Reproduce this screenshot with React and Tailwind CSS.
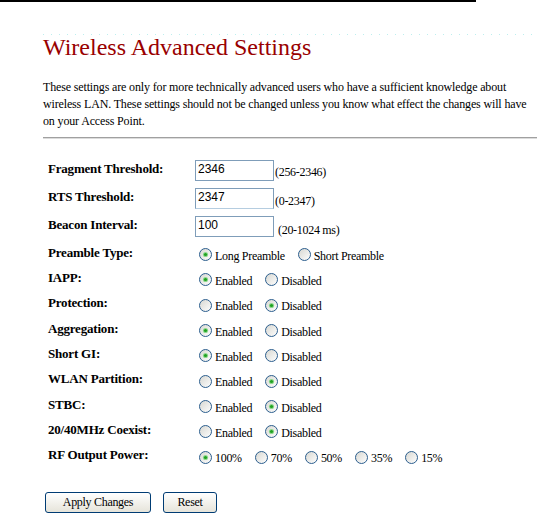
const serif = "font-['Liberation_Serif','Times_New_Roman',serif]"

const textRows = [
  { label: 'Fragment Threshold:', value: '2346', hint: '(256-2346)', hintClass: 'ml-px pt-[6px]' },
  { label: 'RTS Threshold:', value: '2347', hint: '(0-2347)', hintClass: 'ml-px pt-[7px]' },
  { label: 'Beacon Interval:', value: '100', hint: '(20-1024 ms)', hintClass: 'ml-[4px] pt-[8px]' },
]

const radioRows = [
  { label: 'Preamble Type:', options: ['Long Preamble', 'Short Preamble'], checked: 0 },
  { label: 'IAPP:', options: ['Enabled', 'Disabled'], checked: 0 },
  { label: 'Protection:', options: ['Enabled', 'Disabled'], checked: 1 },
  { label: 'Aggregation:', options: ['Enabled', 'Disabled'], checked: 0 },
  { label: 'Short GI:', options: ['Enabled', 'Disabled'], checked: 0 },
  { label: 'WLAN Partition:', options: ['Enabled', 'Disabled'], checked: 1 },
  { label: 'STBC:', options: ['Enabled', 'Disabled'], checked: 1 },
  { label: '20/40MHz Coexist:', options: ['Enabled', 'Disabled'], checked: 1 },
  { label: 'RF Output Power:', options: ['100%', '70%', '50%', '35%', '15%'], checked: 0 },
]

function Radio({ checked }) {
  return (
    <svg width="13" height="13" viewBox="0 0 13 13" className="shrink-0">
      <defs>
        <linearGradient id="xp-radio" x1="0" y1="0" x2="1" y2="1">
          <stop offset="0" stopColor="#d6d6d0" />
          <stop offset="1" stopColor="#ffffff" />
        </linearGradient>
      </defs>
      <circle cx="6.5" cy="6.5" r="6" fill="url(#xp-radio)" stroke="#2c5e8e" strokeWidth="1" />
      {checked ? (
        <>
          <circle cx="6.5" cy="6.5" r="2.6" fill="#8fd88f" />
          <circle cx="6.5" cy="6.5" r="1.6" fill="#21a121" />
        </>
      ) : null}
    </svg>
  )
}

function Label({ children, className = '' }) {
  return (
    <div className={`w-[152px] shrink-0 pl-[5px] text-[13px] leading-[17px] font-bold tracking-[-0.2px] text-black ${className}`}>
      {children}
    </div>
  )
}

export default function App() {
  return (
    <div className={`min-h-[517px] w-[537px] bg-white text-black ${serif}`}>
      <div className="h-[2px] w-[476px] bg-black" />
      <div className="ml-[43px] mt-[32px] h-px bg-[image:repeating-linear-gradient(to_right,#bdeeee_0px,#bdeeee_1px,transparent_1px,transparent_8px)]" />
      <div className="ml-[43px]">
        <h1 className="text-[24px] leading-[24px] font-normal text-[#990000]">Wireless Advanced Settings</h1>
        <p className="mt-[20px] whitespace-nowrap text-[12px] leading-[17px] tracking-[-0.15px]">
          These settings are only for more technically advanced users who have a sufficient knowledge about
          <br />
          wireless LAN. These settings should not be changed unless you know what effect the changes will have
          <br />
          on your Access Point.
        </p>
        <div className="mt-[7px] border-t border-b border-t-[#a0a0a0] border-b-[#dcdcdc]" />

        <div className="mt-[19px]">
          {textRows.map((row) => (
            <div key={row.label} className="flex h-[28px] items-start">
              <Label className="pt-[2px]">{row.label}</Label>
              <input
                readOnly
                defaultValue={row.value}
                className={`mt-[2px] h-[21px] w-[79px] border border-[#7f9db9] bg-white px-[2px] pb-[4px] text-[12px] text-black outline-none font-['Liberation_Sans',Arial,sans-serif] ${row.label === 'RTS Threshold:' ? 'border-b-[#b5cde0]' : ''}`}
              />
              <span className={`text-[12px] leading-[17px] tracking-[-0.3px] ${row.hintClass}`}>{row.hint}</span>
            </div>
          ))}

          {radioRows.map((row) => (
            <div key={row.label} className="flex h-[25.33px] items-center">
              <Label className="mb-[5px]">{row.label}</Label>
              <div className="ml-[4px] flex items-center">
                {row.options.map((opt, i) => (
                  <div key={opt} className="mr-[13px] flex items-center">
                    <Radio checked={i === row.checked} />
                    <span className="ml-[3px] mt-[3px] text-[12px] leading-[17px] tracking-[-0.3px]">{opt}</span>
                  </div>
                ))}
              </div>
            </div>
          ))}
        </div>

        <div className="ml-[2px] mt-[22px] flex gap-[12px]">
          <button
            type="button"
            className="h-[21px] w-[106px] rounded-[3px] border border-[#003c74] bg-gradient-to-b from-white to-[#e6e4da] text-[12px] tracking-[-0.3px] text-black"
          >
            Apply Changes
          </button>
          <button
            type="button"
            className="h-[21px] w-[54px] rounded-[3px] border border-[#003c74] bg-gradient-to-b from-white to-[#e6e4da] text-[12px] tracking-[-0.3px] text-black"
          >
            Reset
          </button>
        </div>
      </div>
    </div>
  )
}
